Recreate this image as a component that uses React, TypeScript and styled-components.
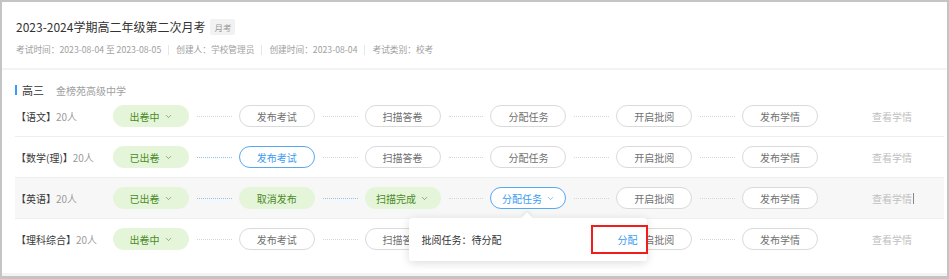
import React from "react";
import styled, { createGlobalStyle, css } from "styled-components";
import { ChevronDown } from "lucide-react";

const GlobalStyle = createGlobalStyle`
  html, body {
    margin: 0;
    padding: 0;
    background: #ffffff;
  }
  body {
    font-family: "Noto Sans CJK SC", "Noto Sans", sans-serif;
    color: #333;
  }
`;

const Frame = styled.div`
  box-sizing: border-box;
  width: 949px;
  height: 279px;
  border-style: solid;
  border-color: #c4c4c4;
  border-width: 2px 2px 3px 2px;
  background: #f3f3f3;
  display: flex;
  flex-direction: column;
  gap: 2px;
  padding: 0 0 3px 0;
  overflow: hidden;
`;

const HeaderCard = styled.div`
  background: #fff;
  padding: 17px 14px 12px;
  display: flex;
  flex-direction: column;
  gap: 8px;
`;

const TitleRow = styled.div`
  display: flex;
  align-items: center;
  gap: 5px;
`;

const Title = styled.div`
  font-size: 12px;
  line-height: 16px;
  color: #333;
`;

const Tag = styled.span`
  font-size: 8.5px;
  line-height: 16px;
  padding: 0 4px;
  background: #f2f2f2;
  color: #999;
  border-radius: 2px;
`;

const Meta = styled.div`
  display: flex;
  align-items: center;
  font-size: 8.7px;
  line-height: 13px;
  color: #a0a0a0;
`;

const MetaSep = styled.span`
  width: 1px;
  height: 10px;
  background: #e6e6e6;
  margin: 0 7px;
`;

const BodyCard = styled.div`
  flex: 1;
  background: #fff;
  padding: 14px 3px 0 13px;
`;

const Section = styled.div`
  display: flex;
  align-items: center;
  height: 12px;
  gap: 12px;
`;

const SectionName = styled.div`
  display: flex;
  align-items: center;
  font-size: 11px;
  color: #333;
  &::before {
    content: "";
    width: 2px;
    height: 10px;
    background: #3a9cf2;
    margin-right: 5px;
  }
`;

const School = styled.span`
  font-size: 10px;
  color: #a0a0a0;
`;

const Row = styled.div<{ $active?: boolean }>`
  display: flex;
  align-items: center;
  height: 40px;
  border-bottom: 1px solid #eee;
  background: ${(p) => (p.$active ? "#f7f7f7" : "#fff")};
  &:last-child {
    border-bottom: none;
  }
`;

const Label = styled.div`
  width: 97px;
  padding-left: 1px;
  font-size: 10px;
  color: #3a3a3a;
  white-space: nowrap;
`;

const Count = styled.span`
  color: #9c9c9c;
`;

type Kind = "green" | "gray" | "blue";

const Pill = styled.div<{ $kind: Kind }>`
  position: relative;
  box-sizing: border-box;
  width: 76px;
  height: 22px;
  flex: none;
  border-radius: 11px;
  display: flex;
  align-items: center;
  justify-content: center;
  gap: 4px;
  font-size: 10px;
  ${(p) =>
    p.$kind === "green" &&
    css`
      background: #e5f5da;
      color: #4a8a26;
    `}
  ${(p) =>
    p.$kind === "gray" &&
    css`
      background: #fff;
      border: 1px solid #dadada;
      color: #707070;
    `}
  ${(p) =>
    p.$kind === "blue" &&
    css`
      background: #fff;
      border: 1px solid #57a8f2;
      color: #3a9cf2;
    `}
`;

const Connector = styled.div<{ $on?: boolean }>`
  width: 49.8px;
  flex: none;
  display: flex;
  align-items: center;
  &::after {
    content: "";
    flex: 1;
    margin: 0 7px 0 8px;
    border-top: 1px dotted ${(p) => (p.$on ? "#8cc4f4" : "#d6d6d6")};
  }
`;

const ViewLink = styled.div`
  margin-left: 54px;
  font-size: 10px;
  color: #c0c0c0;
  display: flex;
  align-items: center;
`;

const Caret = styled.span`
  width: 1px;
  height: 11px;
  background: #888;
  margin-left: 1px;
`;

const Popover = styled.div`
  position: absolute;
  top: calc(100% + 10px);
  left: calc(50% - 119px);
  width: 238px;
  height: 43px;
  box-sizing: border-box;
  background: #fff;
  border-radius: 3px;
  box-shadow: 0 2px 10px rgba(0, 0, 0, 0.14);
  display: flex;
  align-items: center;
  justify-content: space-between;
  padding: 0 0 0 12px;
  z-index: 10;
  &::before {
    content: "";
    position: absolute;
    top: -4px;
    left: 114px;
    width: 8px;
    height: 8px;
    background: #fff;
    transform: rotate(45deg);
    box-shadow: -2px -2px 3px rgba(0, 0, 0, 0.05);
  }
`;

const PopText = styled.span`
  font-size: 10px;
  color: #333;
`;

const AssignBox = styled.span`
  box-sizing: border-box;
  width: 57px;
  height: 29px;
  margin-right: -1px;
  border: 2px solid #f01d1d;
  display: flex;
  align-items: center;
  justify-content: flex-end;
  padding-right: 9px;
  font-size: 10px;
  color: #3a9cf2;
`;

type Step = { text: string; kind: Kind; chevron?: boolean; pop?: boolean };

type RowData = {
  subject: string;
  count: string;
  active?: boolean;
  steps: Step[];
  links: boolean[];
  caret?: boolean;
};

const grayRest = (texts: string[]): Step[] => texts.map((text) => ({ text, kind: "gray" }));

const rows: RowData[] = [
  {
    subject: "【语文】",
    count: "20人",
    steps: [
      { text: "出卷中", kind: "green", chevron: true },
      ...grayRest(["发布考试", "扫描答卷", "分配任务", "开启批阅", "发布学情"]),
    ],
    links: [false, false, false, false, false],
  },
  {
    subject: "【数学(理)】",
    count: "20人",
    steps: [
      { text: "已出卷", kind: "green", chevron: true },
      { text: "发布考试", kind: "blue" },
      ...grayRest(["扫描答卷", "分配任务", "开启批阅", "发布学情"]),
    ],
    links: [true, false, false, false, false],
  },
  {
    subject: "【英语】",
    count: "20人",
    active: true,
    caret: true,
    steps: [
      { text: "已出卷", kind: "green", chevron: true },
      { text: "取消发布", kind: "green" },
      { text: "扫描完成", kind: "green", chevron: true },
      { text: "分配任务", kind: "blue", chevron: true, pop: true },
      ...grayRest(["开启批阅", "发布学情"]),
    ],
    links: [true, true, false, false, false],
  },
  {
    subject: "【理科综合】",
    count: "20人",
    steps: [
      { text: "出卷中", kind: "green", chevron: true },
      ...grayRest(["发布考试", "扫描答卷", "分配任务", "开启批阅", "发布学情"]),
    ],
    links: [false, false, false, false, false],
  },
];

export default function App() {
  return (
    <>
      <GlobalStyle />
      <Frame>
        <HeaderCard>
          <TitleRow>
            <Title>2023-2024学期高二年级第二次月考</Title>
            <Tag>月考</Tag>
          </TitleRow>
          <Meta>
            <span>考试时间：2023-08-04 至 2023-08-05</span>
            <MetaSep />
            <span>创建人：学校管理员</span>
            <MetaSep />
            <span>创建时间：2023-08-04</span>
            <MetaSep />
            <span>考试类别：校考</span>
          </Meta>
        </HeaderCard>
        <BodyCard>
          <Section>
            <SectionName>高三</SectionName>
            <School>金榜苑高级中学</School>
          </Section>
          {rows.map((row) => (
            <Row key={row.subject} $active={row.active}>
              <Label>
                {row.subject}
                <Count>{row.count}</Count>
              </Label>
              {row.steps.map((step, i) => (
                <React.Fragment key={step.text + i}>
                  {i > 0 && <Connector $on={row.links[i - 1]} />}
                  <Pill $kind={step.kind}>
                    {step.text}
                    {step.chevron && <ChevronDown size={9} strokeWidth={1.6} />}
                    {step.pop && (
                      <Popover>
                        <PopText>批阅任务：待分配</PopText>
                        <AssignBox>分配</AssignBox>
                      </Popover>
                    )}
                  </Pill>
                </React.Fragment>
              ))}
              <ViewLink>
                查看学情
                {row.caret && <Caret />}
              </ViewLink>
            </Row>
          ))}
        </BodyCard>
      </Frame>
    </>
  );
}
